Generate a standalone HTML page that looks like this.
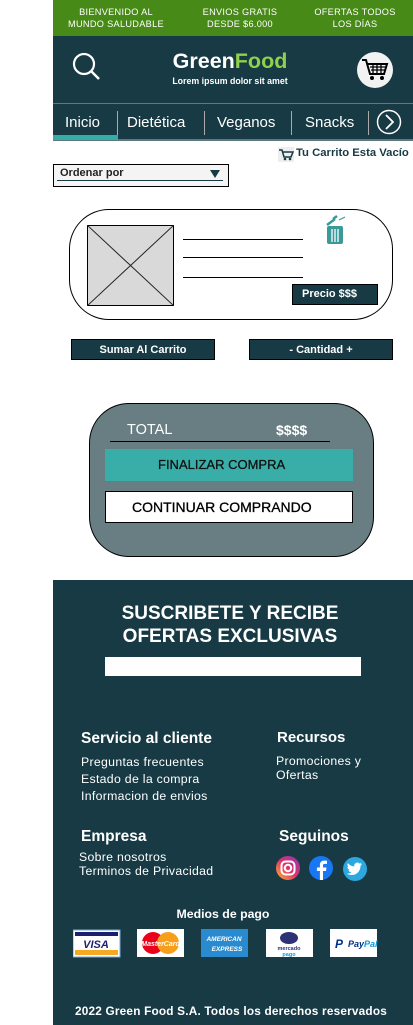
<!DOCTYPE html>
<html><head><meta charset="utf-8"><style>
*{margin:0;padding:0;box-sizing:border-box}
body{width:413px;height:1025px;position:relative;background:#fff;font-family:"Liberation Sans",sans-serif;overflow:hidden}
.a{position:absolute}
.w{color:#fff}
.b{font-weight:bold}
.dk{background:#173a44}
</style></head><body>
<div class="a" style="left:53px;top:0;width:360px;height:36px;background:#478a17"></div>
<div class="a w" style="left:53px;top:6px;width:126px;text-align:center;font-size:9.2px;line-height:12px;letter-spacing:.3px">BIENVENIDO AL<br>MUNDO SALUDABLE</div>
<div class="a w" style="left:185px;top:6px;width:110px;text-align:center;font-size:9.2px;line-height:12px;letter-spacing:.3px">ENVIOS GRATIS<br>DESDE $6.000</div>
<div class="a w" style="left:300px;top:6px;width:110px;text-align:center;font-size:9.2px;line-height:12px;letter-spacing:.3px">OFERTAS TODOS<br>LOS DÍAS</div>
<div class="a dk" style="left:53px;top:36px;width:360px;height:105px"></div>
<div class="a" style="left:53px;top:103px;width:360px;height:1px;background:#5d7a80"></div>
<div class="a" style="left:53px;top:139px;width:360px;height:2px;background:#5d7a80"></div>
<svg class="a" style="left:70px;top:50px" width="32" height="32"><circle cx="14" cy="14" r="10" fill="none" stroke="#fff" stroke-width="2.2"/><line x1="21" y1="21" x2="29" y2="29" stroke="#fff" stroke-width="2.5"/></svg>
<div class="a w b" style="left:140px;top:49px;width:180px;text-align:center;font-size:21.5px">Green<span style="color:#8fd04c">Food</span></div>
<div class="a w b" style="left:150px;top:76px;width:160px;text-align:center;font-size:8.8px">Lorem ipsum dolor sit amet</div>
<div class="a" style="left:357px;top:52px;width:36px;height:36px;border-radius:50%;background:#f2f2f2"></div>
<svg class="a" style="left:360px;top:56px" width="30" height="28"><path d="M2 4h4l4 14h14l3-10H8" fill="none" stroke="#000" stroke-width="2"/><path d="M10 11h16M13 8v10M17 8v10M21 8v10M11 14h14" stroke="#000" stroke-width="1.3"/><circle cx="12" cy="22" r="2" fill="#000"/><circle cx="22" cy="22" r="2" fill="#000"/></svg>
<div class="a" style="left:53px;top:135px;width:65px;height:5px;background:#36aca6"></div>
<div class="a w" style="left:65px;top:114px;font-size:15px">Inicio</div>
<div class="a w" style="left:127px;top:114px;font-size:15px">Dietética</div>
<div class="a w" style="left:217px;top:114px;font-size:15px">Veganos</div>
<div class="a w" style="left:305px;top:114px;font-size:15px">Snacks</div>
<div class="a" style="left:117px;top:111px;width:1px;height:24px;background:#aaa"></div>
<div class="a" style="left:204px;top:111px;width:1px;height:24px;background:#aaa"></div>
<div class="a" style="left:291px;top:111px;width:1px;height:24px;background:#aaa"></div>
<div class="a" style="left:368px;top:111px;width:1px;height:24px;background:#aaa"></div>
<svg class="a" style="left:376px;top:109px" width="26" height="26"><circle cx="13" cy="13" r="11.5" fill="none" stroke="#fff" stroke-width="1.5"/><path d="M10 6l7 7-7 7" fill="none" stroke="#fff" stroke-width="1.8"/></svg>
<svg class="a" style="left:278px;top:147px" width="16" height="15"><rect width="16" height="15" fill="#eee"/><path d="M1 3h3l2 7h7l2-5H4" fill="none" stroke="#173a44" stroke-width="1.5"/><circle cx="7" cy="12" r="1.3" fill="#173a44"/><circle cx="12" cy="12" r="1.3" fill="#173a44"/></svg>
<div class="a b" style="left:296px;top:147px;font-size:11.3px;color:#173a44">Tu Carrito Esta Vacío</div>
<div class="a" style="left:53px;top:164px;width:176px;height:23px;border:1.5px solid #000;background:#f4f4f4"></div>
<div class="a" style="left:57px;top:180px;width:166px;height:1px;background:#173a44"></div>
<div class="a b" style="left:60px;top:167px;font-size:11px;color:#222">Ordenar por</div>
<div class="a" style="left:210px;top:170px;border-left:5px solid transparent;border-right:5px solid transparent;border-top:8px solid #173a44"></div>
<div class="a" style="left:69px;top:209px;width:324px;height:111px;border:1.5px solid #000;border-radius:40px"></div>
<svg class="a" style="left:87px;top:225px" width="87" height="81"><rect x=".5" y=".5" width="86" height="80" fill="#d9d9d9" stroke="#000"/><path d="M0 0L87 81M87 0L0 81" stroke="#222"/></svg>
<div class="a" style="left:183px;top:239px;width:120px;height:1px;background:#000"></div>
<div class="a" style="left:183px;top:257px;width:120px;height:1px;background:#000"></div>
<div class="a" style="left:183px;top:277px;width:120px;height:1px;background:#000"></div>
<svg class="a" style="left:325px;top:215px" width="26" height="31"><path d="M2 10l8-6M8 4l4-3" stroke="#3a9a9a" stroke-width="2.5"/><path d="M14 5l6-3" stroke="#3a9a9a" stroke-width="1.2"/><rect x="2" y="11" width="16" height="18" rx="2" fill="#3a9a9a"/><path d="M7 14v13M10 14v13M13 14v13" stroke="#fff" stroke-width="1.3"/></svg>
<div class="a dk w b" style="left:292px;top:284px;width:86px;height:21px;border:1px solid #000;font-size:11px;padding:3px 0 0 9px">Precio $$$</div>
<div class="a dk w b" style="left:71px;top:339px;width:144px;height:21px;border:1px solid #000;font-size:11px;text-align:center;padding-top:4px">Sumar Al Carrito</div>
<div class="a dk w b" style="left:249px;top:339px;width:144px;height:21px;border:1px solid #000;font-size:11px;text-align:center;padding-top:4px">- Cantidad +</div>
<div class="a" style="left:89px;top:403px;width:285px;height:154px;background:#687e82;border:1.5px solid #000;border-radius:40px"></div>
<div class="a w" style="left:127px;top:422px;font-size:14.5px">TOTAL</div>
<div class="a w b" style="left:276px;top:422px;font-size:14px">$$$$</div>
<div class="a" style="left:110px;top:441px;width:220px;height:1px;background:#000"></div>
<div class="a" style="left:105px;top:449px;width:248px;height:32px;background:#39aea8;font-size:13px;padding:8px 0 0 53px;color:#111;-webkit-text-stroke:.3px #111">FINALIZAR COMPRA</div>
<div class="a" style="left:105px;top:491px;width:248px;height:32px;background:#fff;border:1px solid #000;font-size:14px;padding:7px 0 0 26px;-webkit-text-stroke:.3px #000">CONTINUAR COMPRANDO</div>
<div class="a dk" style="left:53px;top:580px;width:360px;height:445px"></div>
<div class="a w b" style="left:53px;top:602px;width:360px;text-align:center;font-size:19px;line-height:23px;padding-right:6px">SUSCRIBETE Y RECIBE<br>OFERTAS EXCLUSIVAS</div>
<div class="a" style="left:105px;top:657px;width:256px;height:19px;background:#fff"></div>
<div class="a w b" style="left:81px;top:730px;font-size:15.5px">Servicio al cliente</div>
<div class="a w" style="left:81px;top:754px;font-size:12.3px;line-height:17px;letter-spacing:.3px">Preguntas frecuentes<br>Estado de la compra<br>Informacion de envios</div>
<div class="a w b" style="left:277px;top:729px;font-size:15px">Recursos</div>
<div class="a w" style="left:276px;top:754px;font-size:12.3px;line-height:14px;letter-spacing:.3px">Promociones y<br>Ofertas</div>
<div class="a w b" style="left:81px;top:828px;font-size:15.5px">Empresa</div>
<div class="a w" style="left:79px;top:850px;font-size:12.3px;line-height:14px;letter-spacing:.3px">Sobre nosotros<br>Terminos de Privacidad</div>
<div class="a w b" style="left:279px;top:828px;font-size:15.5px">Seguinos</div>
<svg class="a" style="left:276px;top:855px" width="95" height="27"><defs><linearGradient id="ig" x1="0" y1="1" x2="1" y2="0"><stop offset="0" stop-color="#fdb930"/><stop offset=".5" stop-color="#e1306c"/><stop offset="1" stop-color="#833ab4"/></linearGradient></defs><circle cx="12" cy="13" r="12" fill="url(#ig)"/><rect x="5.5" y="6.5" width="13" height="13" rx="4" fill="none" stroke="#fff" stroke-width="2"/><circle cx="12" cy="13" r="3.2" fill="none" stroke="#fff" stroke-width="2"/><circle cx="45" cy="13" r="12" fill="#1877f2"/><path d="M47 25v-9h3l.5-3.5H47v-2c0-1 .4-1.6 1.7-1.6H51V5.8c-.5-.1-1.6-.2-2.8-.2-2.7 0-4.3 1.6-4.3 4.4v2.5h-3V16h3v9z" fill="#fff"/><circle cx="79" cy="14" r="12" fill="#2ca7e0"/><path d="M86 9c-.6.3-1.200.4-1.800.5.7-.4 1.100-1 1.400-1.700-.6.4-1.300.6-2 .8a3.100 3.100 0 0 0-5.300 2.800c-2.600-.1-4.900-1.400-6.400-3.300-.9 1.500-.4 3.300.9 4.200-.5 0-1-.2-1.400-.4 0 1.500 1.100 2.800 2.500 3.100-.5.1-1 .2-1.400.1.4 1.300 1.600 2.200 2.900 2.200-1.300 1-3 1.500-4.600 1.300 1.400.9 3.100 1.400 4.800 1.400 5.800 0 9-4.900 8.900-9.300.6-.4 1.100-1 1.500-1.600z" fill="#fff"/></svg>
<div class="a w b" style="left:53px;top:907px;width:340px;text-align:center;font-size:12.3px">Medios de pago</div>
<svg class="a" style="left:73px;top:929px" width="305" height="29" font-family="Liberation Sans" font-weight="bold" font-style="italic">
<rect x="0" y="1" width="47" height="27" fill="#fff" stroke="#7aa9d8"/><rect x="2" y="3" width="43" height="4" fill="#1a1f71"/><rect x="2" y="21" width="43" height="5" fill="#f7a823"/><text x="23" y="19" text-anchor="middle" font-size="11" fill="#1a1f71">VISA</text>
<rect x="64" y="0" width="47" height="28" fill="#fff"/><circle cx="80" cy="14" r="11" fill="#eb001b"/><circle cx="95" cy="14" r="11" fill="#f79e1b"/><text x="87.5" y="17" text-anchor="middle" font-size="7" fill="#fff">MasterCard</text>
<rect x="128" y="0" width="47" height="28" fill="#2a8ad0"/><text x="151" y="12" text-anchor="middle" font-size="6.5" fill="#fff">AMERICAN</text><text x="154" y="22" text-anchor="middle" font-size="6.5" fill="#fff">EXPRESS</text>
<rect x="193" y="0" width="47" height="28" fill="#fff"/><ellipse cx="216" cy="9" rx="9" ry="6" fill="#2d3277"/><text x="216" y="21" text-anchor="middle" font-size="5.5" font-style="normal" fill="#2d3277">mercado</text><text x="216" y="27" text-anchor="middle" font-size="5.5" font-style="normal" fill="#009ee3">pago</text>
<rect x="257" y="0" width="47" height="28" fill="#fff"/><text x="262" y="19" font-size="12" fill="#003087">P</text><text x="275" y="18" font-size="9" fill="#003087">Pay<tspan fill="#009cde">Pal</tspan></text>
</svg>
<div class="a w b" style="left:53px;top:1004px;width:360px;text-align:center;font-size:11.8px;letter-spacing:.2px;padding-right:4px">2022 Green Food S.A. Todos los derechos reservados</div>
</body></html>
